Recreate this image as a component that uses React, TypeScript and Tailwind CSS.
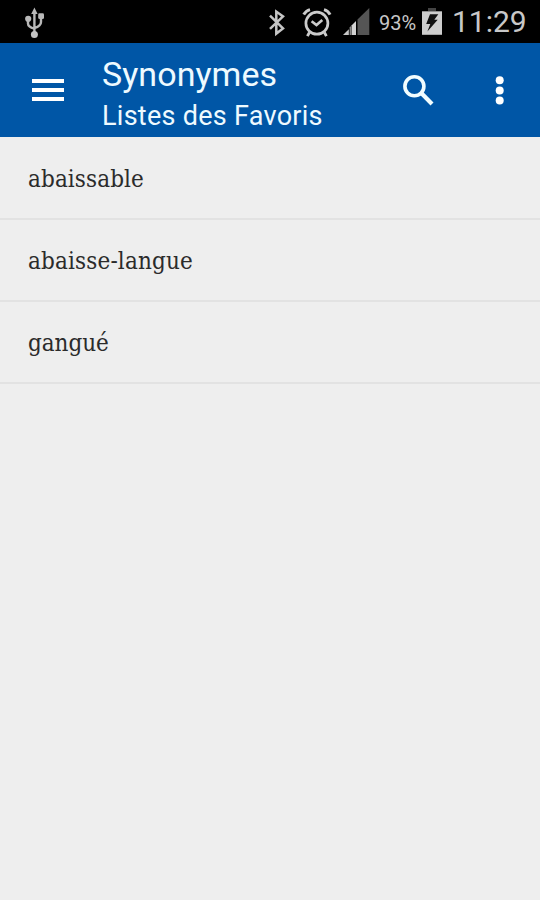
import React from 'react';

const favoris = [
  { mot: 'abaissable', spacing: 'tracking-[0.1px]' },
  { mot: 'abaisse-langue', spacing: 'tracking-[0.15px]' },
  { mot: 'gangué', spacing: 'tracking-[-0.05px]' },
];

function UsbIcon() {
  return (
    <svg width="22" height="32" viewBox="0 0 22 32" fill="none" stroke="#b8b8b8" strokeWidth="2.4">
      <path d="M11.4 4v24M5 12v4.5q0 3.4 6.4 5.2M18 10v5q0 4.2-6.6 6" />
      <path d="M11.4 0.5l3.2 6.5H8.2z" fill="#b8b8b8" stroke="none" />
      <circle cx="5.2" cy="11.8" r="3.1" fill="#b8b8b8" stroke="none" />
      <rect x="15.2" y="6.3" width="5.8" height="5.8" rx="1.4" fill="#b8b8b8" stroke="none" />
      <circle cx="11.4" cy="27.4" r="3.5" fill="#c4c4c4" stroke="none" />
    </svg>
  );
}

function BluetoothIcon() {
  return (
    <svg width="18" height="28" viewBox="0 0 18 28" fill="none" stroke="#c6c6c6" strokeWidth="2.5">
      <path d="M2 6.6l13 12.8L8.3 24.6V2.6L15 7.4 2 19.8" />
    </svg>
  );
}

function AlarmIcon() {
  return (
    <svg width="30" height="30" viewBox="0 0 30 30" fill="none" stroke="#cbcbcb">
      <circle cx="14.9" cy="16.2" r="11" strokeWidth="2.7" />
      <path d="M9.6 14.2l4.9 3.9 5.8-5" strokeWidth="2.6" />
      <path d="M1.7 7.6Q4 3.6 8 2.6M28.1 7.6Q26 3.6 22 2.6" strokeWidth="3" />
      <path d="M7.4 25.5l-2 3.7M22.4 25.5l2 3.7" strokeWidth="2.8" />
    </svg>
  );
}

function SignalIcon() {
  return (
    <svg width="28" height="28" viewBox="0 0 28 28">
      <path d="M15.5 11.5L27.3 0v27H15.5z" fill="#555" />
      <path d="M1 27l5.8-5.8V27z" fill="#c8c8c8" />
      <path d="M7.6 19.4l1.4-1.4v9H7.6z" fill="#888" />
      <path d="M9.5 17.5L14 13v14H9.5z" fill="#d2d2d2" />
    </svg>
  );
}

function BatteryIcon() {
  return (
    <svg width="20" height="29" viewBox="0 0 20 29">
      <path d="M6 1h8v3H6z" fill="#444" />
      <path d="M0 4.3h20v23.5H0z" fill="#cecece" />
      <path d="M8 7.3h8.3l-4 5.4h3.4L5.4 24.4l2.9-7.5H4.2z" fill="#111" />
    </svg>
  );
}

function StatusBar() {
  return (
    <div className="flex h-[43px] items-start bg-black font-['Roboto',sans-serif] text-[#c8c8c8]">
      <div className="ml-[23px] mt-[7px]"><UsbIcon /></div>
      <div className="ml-[223px] mt-[9px]"><BluetoothIcon /></div>
      <div className="ml-4 mt-[7px]"><AlarmIcon /></div>
      <div className="ml-[10px] mt-[8px]"><SignalIcon /></div>
      <span className="ml-[9px] mt-[11px] w-[38px] text-[20px] leading-6 whitespace-nowrap">93%</span>
      <div className="ml-[5px] mt-[7px]"><BatteryIcon /></div>
      <span className="ml-[10px] mt-[4px] text-[30px] leading-9 whitespace-nowrap">11:29</span>
    </div>
  );
}

function AppBar() {
  return (
    <header className="flex h-[94px] items-start bg-[#0056a6] font-['Roboto',sans-serif] text-[#eefaff]">
      <div className="ml-8 mt-[36px] flex w-8 flex-col gap-[5px]">
        <span className="h-[4px] bg-white" />
        <span className="h-[4px] bg-white" />
        <span className="h-[4px] bg-white" />
      </div>
      <div className="ml-[38px] mt-[11px] w-[240px] whitespace-nowrap">
        <h1 className="text-[34px] leading-10 tracking-[0.05px]">Synonymes</h1>
        <h2 className="mt-[4px] text-[27px] leading-9 tracking-[0.27px]">Listes des Favoris</h2>
      </div>
      <svg className="ml-[60px] mt-[31px]" width="32" height="32" viewBox="0 0 32 32" fill="none" stroke="#f2fdff">
        <circle cx="12.4" cy="12.2" r="9.5" strokeWidth="3.6" />
        <path d="M19 18.8l11 11.2" strokeWidth="4.2" />
      </svg>
      <svg className="ml-[61px] mt-[32px]" width="9" height="32" viewBox="0 0 9 32" fill="#fff">
        <circle cx="4.7" cy="5.3" r="4" />
        <circle cx="4.7" cy="15.5" r="4" />
        <circle cx="4.7" cy="25.6" r="4" />
      </svg>
    </header>
  );
}

export default function App() {
  return (
    <div className="h-[900px] w-[540px] overflow-hidden bg-[#eeeeee]">
      <StatusBar />
      <AppBar />
      <ul className="pt-px">
        {favoris.map(({ mot, spacing }) => (
          <li key={mot} className="flex h-[82px] items-center border-b-2 border-[#e2e2e2] pt-0.5 pl-7">
            <span className={`font-['DejaVu_Serif_Condensed','DejaVu_Serif',serif] text-[24px] text-[#2b2b2b] ${spacing}`}>
              {mot}
            </span>
          </li>
        ))}
      </ul>
    </div>
  );
}
